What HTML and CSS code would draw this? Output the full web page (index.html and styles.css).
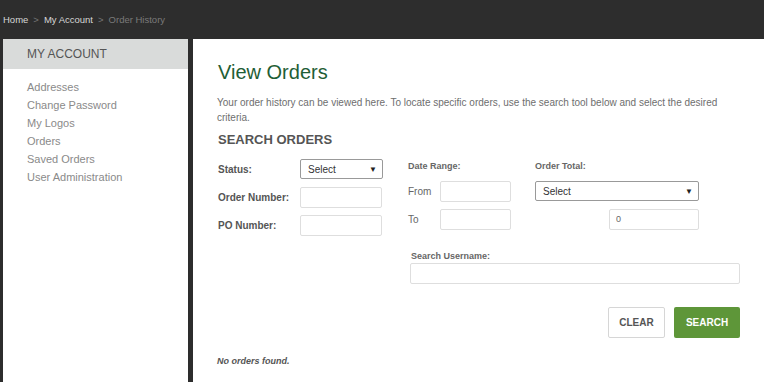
FILE: index.html
```html
<!DOCTYPE html>
<html lang="en">
<head>
    <meta charset="UTF-8">
    <title>Order History</title>
    <link rel="stylesheet" href="styles.css">
</head>
<body>
    <div class="topbar">
        <a class="crumb" href="#">Home</a>
        <span class="sep">&gt;</span>
        <a class="crumb" href="#">My Account</a>
        <span class="sep">&gt;</span>
        <span class="crumb-current">Order History</span>
    </div>

    <div class="page">
        <aside class="sidebar">
            <div class="sidebar-title">MY ACCOUNT</div>
            <ul class="side-links">
                <li><a href="#">Addresses</a></li>
                <li><a href="#">Change Password</a></li>
                <li><a href="#">My Logos</a></li>
                <li><a href="#">Orders</a></li>
                <li><a href="#">Saved Orders</a></li>
                <li><a href="#">User Administration</a></li>
            </ul>
        </aside>

        <main class="content">
            <h1>View Orders</h1>
            <p class="intro">Your order history can be viewed here. To locate specific orders, use the search tool below and select the desired criteria.</p>

            <h2>SEARCH ORDERS</h2>

            <div class="filters">
                <div class="col col-main">
                    <div class="row">
                        <label>Status:</label>
                        <div class="fake-select small">Select <span class="arrow">&#9660;</span></div>
                    </div>
                    <div class="row">
                        <label>Order Number:</label>
                        <input type="text" class="field">
                    </div>
                    <div class="row">
                        <label>PO Number:</label>
                        <input type="text" class="field">
                    </div>
                </div>

                <div class="col col-date">
                    <div class="col-head">Date Range:</div>
                    <div class="row">
                        <label class="light">From</label>
                        <input type="text" class="field date">
                    </div>
                    <div class="row">
                        <label class="light">To</label>
                        <input type="text" class="field date">
                    </div>
                </div>

                <div class="col col-total">
                    <div class="col-head">Order Total:</div>
                    <div class="row">
                        <div class="fake-select wide">Select <span class="arrow">&#9660;</span></div>
                    </div>
                    <div class="row end">
                        <input type="text" class="field amount" value="0">
                    </div>
                </div>
            </div>

            <div class="username">
                <label>Search Username:</label>
                <input type="text" class="field full">
            </div>

            <div class="actions">
                <button class="btn btn-clear">CLEAR</button>
                <button class="btn btn-search">SEARCH</button>
            </div>

            <p class="empty">No orders found.</p>
        </main>
    </div>
</body>
</html>
```

FILE: styles.css
```css
body {
    margin: 0;
    font-family: "Liberation Sans", Arial, sans-serif;
    background: #fff;
    color: #555;
    height: 382px;
    overflow: hidden;
}

.topbar {
    height: 39px;
    background: #2d2d2d;
    display: flex;
    align-items: center;
    padding-left: 3px;
    font-size: 9.5px;
    gap: 3px;
}

.crumb {
    color: #d6d6d6;
    text-decoration: none;
}

.sep {
    color: #777;
    margin: 0 2px;
}

.crumb-current {
    color: #7a7a7a;
}

.page {
    display: flex;
    height: 343px;
}

.sidebar {
    width: 186px;
    border-left: 3px solid #2d2d2d;
    border-right: 5px solid #2d2d2d;
    background: #fff;
}

.sidebar-title {
    height: 30px;
    line-height: 30px;
    background: #d9dbda;
    padding-left: 24px;
    font-size: 12px;
    color: #555;
}

.side-links {
    list-style: none;
    margin: 8px 0 0;
    padding: 0 0 0 24px;
}

.side-links li {
    height: 18px;
    line-height: 18px;
}

.side-links a {
    color: #8a8a8a;
    text-decoration: none;
    font-size: 11px;
}

.content {
    flex: 1;
    padding: 0 24px;
}

h1 {
    font-size: 20px;
    font-weight: normal;
    color: #1f5e36;
    margin: 21px 0 0 1px;
    line-height: 24px;
}

.intro {
    font-size: 10px;
    line-height: 15px;
    color: #6e6e6e;
    margin: 11px 0 0;
}

h2 {
    font-size: 13px;
    color: #555;
    margin: 6px 0 0 1px;
    line-height: 18px;
}

.filters {
    display: flex;
    margin-top: 10px;
    margin-left: 1px;
}

.col {
    display: flex;
    flex-direction: column;
    gap: 8px;
}

.col-main {
    width: 190px;
}

.col-date {
    width: 127px;
}

.col-total {
    width: 164px;
}

.col-head {
    font-size: 9px;
    font-weight: bold;
    color: #666;
    height: 14px;
    line-height: 14px;
}

.row {
    display: flex;
    align-items: center;
    height: 20px;
}

.row.end {
    justify-content: flex-end;
}

label {
    font-size: 10px;
    font-weight: bold;
    color: #555;
    width: 82px;
    flex-shrink: 0;
}

label.light {
    width: 32px;
    font-weight: normal;
    color: #666;
}

.field {
    box-sizing: border-box;
    height: 21px;
    width: 82px;
    border: 1px solid #dedede;
    border-radius: 2px;
    padding: 0 6px;
    font-size: 9px;
    font-family: inherit;
    color: #666;
    margin: 0;
}

.field.date {
    width: 71px;
}

.field.amount {
    width: 90px;
}

.field.full {
    width: 330px;
}

.fake-select {
    box-sizing: border-box;
    height: 20px;
    border: 1px solid #999;
    border-radius: 2px;
    display: flex;
    align-items: center;
    justify-content: space-between;
    padding: 0 5px 0 7px;
    font-size: 10px;
    color: #333;
    background: #fff;
}

.fake-select.small {
    width: 83px;
}

.fake-select.wide {
    width: 165px;
}

.arrow {
    font-size: 8px;
    color: #222;
}

.username {
    margin: 16px 0 0 193px;
}

.username label {
    display: block;
    width: auto;
    font-size: 9px;
    color: #666;
    line-height: 11px;
    margin-left: 1px;
}

.username .field {
    margin-top: 0;
}

.actions {
    display: flex;
    justify-content: flex-end;
    gap: 9px;
    margin-top: 23px;
}

.btn {
    height: 31px;
    font-family: inherit;
    font-size: 10px;
    font-weight: bold;
    border-radius: 2px;
    cursor: pointer;
}

.btn-clear {
    width: 57px;
    background: #fff;
    color: #555;
    border: 1px solid #d6d6d6;
}

.btn-search {
    width: 66px;
    background: #5e9639;
    color: #fff;
    border: none;
}

.empty {
    font-size: 9px;
    font-weight: bold;
    font-style: italic;
    color: #555;
    margin: 18px 0 0;
}
```
